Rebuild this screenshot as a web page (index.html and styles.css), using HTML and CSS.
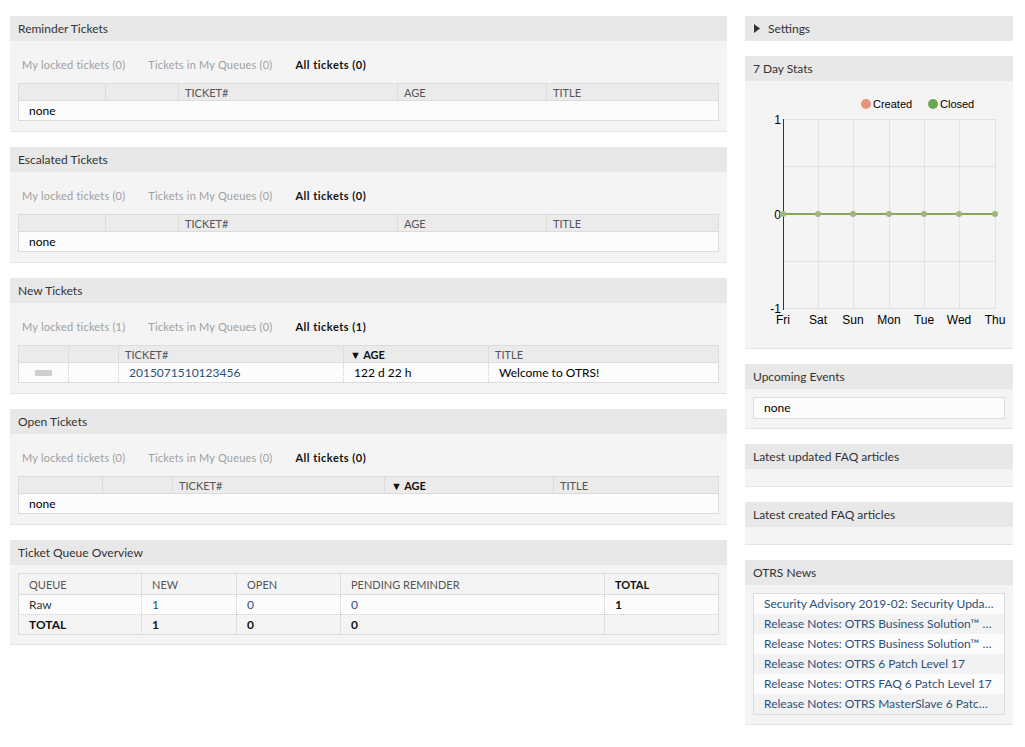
FILE: index.html
```html
<!DOCTYPE html>
<html>
<head>
<meta charset="utf-8">
<title>Dashboard</title>
<link rel="stylesheet" href="styles.css">
</head>
<body>
<div class="page">
  <div class="main">
    <section class="widget">
      <h2 class="widget-head">Reminder Tickets</h2>
      <div class="widget-body">
        <div class="tabs"><span class="tab">My locked tickets (0)</span><span class="tab">Tickets in My Queues (0)</span><span class="tab active">All tickets (0)</span></div>
        <table class="tickets">
          <colgroup><col style="width:87px"><col style="width:73px"><col style="width:219px"><col style="width:149px"><col></colgroup>
          <thead><tr><th></th><th></th><th>TICKET#</th><th>AGE</th><th>TITLE</th></tr></thead>
          <tbody><tr><td colspan="5" class="none">none</td></tr></tbody>
        </table>
      </div>
    </section>
    <section class="widget">
      <h2 class="widget-head">Escalated Tickets</h2>
      <div class="widget-body">
        <div class="tabs"><span class="tab">My locked tickets (0)</span><span class="tab">Tickets in My Queues (0)</span><span class="tab active">All tickets (0)</span></div>
        <table class="tickets">
          <colgroup><col style="width:87px"><col style="width:73px"><col style="width:219px"><col style="width:149px"><col></colgroup>
          <thead><tr><th></th><th></th><th>TICKET#</th><th>AGE</th><th>TITLE</th></tr></thead>
          <tbody><tr><td colspan="5" class="none">none</td></tr></tbody>
        </table>
      </div>
    </section>
    <section class="widget">
      <h2 class="widget-head">New Tickets</h2>
      <div class="widget-body">
        <div class="tabs"><span class="tab">My locked tickets (1)</span><span class="tab">Tickets in My Queues (0)</span><span class="tab active">All tickets (1)</span></div>
        <table class="tickets">
          <colgroup><col style="width:50px"><col style="width:50px"><col style="width:225px"><col style="width:145px"><col></colgroup>
          <thead><tr><th></th><th></th><th>TICKET#</th><th class="sorted">&#9660; AGE</th><th>TITLE</th></tr></thead>
          <tbody><tr><td><span class="prio"></span></td><td></td><td><a class="link" href="#">2015071510123456</a></td><td>122 d 22 h</td><td>Welcome to OTRS!</td></tr></tbody>
        </table>
      </div>
    </section>
    <section class="widget">
      <h2 class="widget-head">Open Tickets</h2>
      <div class="widget-body">
        <div class="tabs"><span class="tab">My locked tickets (0)</span><span class="tab">Tickets in My Queues (0)</span><span class="tab active">All tickets (0)</span></div>
        <table class="tickets">
          <colgroup><col style="width:84px"><col style="width:70px"><col style="width:212px"><col style="width:169px"><col></colgroup>
          <thead><tr><th></th><th></th><th>TICKET#</th><th class="sorted">&#9660; AGE</th><th>TITLE</th></tr></thead>
          <tbody><tr><td colspan="5" class="none">none</td></tr></tbody>
        </table>
      </div>
    </section>
    <section class="widget">
      <h2 class="widget-head">Ticket Queue Overview</h2>
      <div class="widget-body queue-body">
        <table class="queue">
          <colgroup><col style="width:123px"><col style="width:95px"><col style="width:104px"><col style="width:264px"><col></colgroup>
          <thead><tr><th>QUEUE</th><th>NEW</th><th>OPEN</th><th>PENDING REMINDER</th><th class="b">TOTAL</th></tr></thead>
          <tbody>
            <tr><td>Raw</td><td><a class="link" href="#">1</a></td><td><a class="link" href="#">0</a></td><td><a class="link" href="#">0</a></td><td class="b">1</td></tr>
            <tr class="total"><td>TOTAL</td><td>1</td><td>0</td><td>0</td><td></td></tr>
          </tbody>
        </table>
      </div>
    </section>
  </div>

  <div class="side">
    <section class="widget collapsed">
      <h2 class="widget-head settings"><svg class="tri" width="6" height="9" viewBox="0 0 6 9"><path d="M0 0 L6 4.5 L0 9 Z" fill="#333"/></svg>Settings</h2>
    </section>
    <section class="widget">
      <h2 class="widget-head">7 Day Stats</h2>
      <div class="widget-body chart-body">
        <svg class="chart" width="268" height="267" viewBox="0 0 268 267">
          <g font-family="Liberation Sans, Arial, sans-serif" font-size="11" fill="#000">
            <circle cx="121" cy="23" r="5" fill="#e8937a"/>
            <text x="128" y="27">Created</text>
            <circle cx="188" cy="23" r="5" fill="#6aa84f"/>
            <text x="195" y="27">Closed</text>
          </g>
          <g stroke="#e2e2e2" stroke-width="1">
            <line x1="38" y1="38.5" x2="250" y2="38.5"/>
            <line x1="38" y1="85.5" x2="250" y2="85.5"/>
            <line x1="38" y1="180.5" x2="250" y2="180.5"/>
            <line x1="38" y1="227.5" x2="250" y2="227.5"/>
            <line x1="73.5" y1="38" x2="73.5" y2="228"/>
            <line x1="108.5" y1="38" x2="108.5" y2="228"/>
            <line x1="144.5" y1="38" x2="144.5" y2="228"/>
            <line x1="179.5" y1="38" x2="179.5" y2="228"/>
            <line x1="214.5" y1="38" x2="214.5" y2="228"/>
            <line x1="250.5" y1="38" x2="250.5" y2="228"/>
          </g>
          <line x1="38.5" y1="38" x2="38.5" y2="229" stroke="#333" stroke-width="1"/>
          <g font-family="Liberation Sans, Arial, sans-serif" font-size="12" fill="#000">
            <text x="36" y="43" text-anchor="end">1</text>
            <text x="36" y="138" text-anchor="end">0</text>
            <text x="36" y="232" text-anchor="end">-1</text>
            <text x="38" y="243" text-anchor="middle">Fri</text>
            <text x="73" y="243" text-anchor="middle">Sat</text>
            <text x="108" y="243" text-anchor="middle">Sun</text>
            <text x="144" y="243" text-anchor="middle">Mon</text>
            <text x="179" y="243" text-anchor="middle">Tue</text>
            <text x="214" y="243" text-anchor="middle">Wed</text>
            <text x="250" y="243" text-anchor="middle">Thu</text>
          </g>
          <line x1="38" y1="133" x2="250" y2="133" stroke="#87a85c" stroke-width="2"/>
          <g fill="#9fb878">
            <circle cx="38" cy="133" r="3"/>
            <circle cx="73" cy="133" r="3"/>
            <circle cx="108" cy="133" r="3"/>
            <circle cx="144" cy="133" r="3"/>
            <circle cx="179" cy="133" r="3"/>
            <circle cx="214" cy="133" r="3"/>
            <circle cx="250" cy="133" r="3"/>
          </g>
        </svg>
      </div>
    </section>
    <section class="widget">
      <h2 class="widget-head">Upcoming Events</h2>
      <div class="widget-body list-body">
        <div class="box"><div class="box-row plain">none</div></div>
      </div>
    </section>
    <section class="widget">
      <h2 class="widget-head">Latest updated FAQ articles</h2>
      <div class="widget-body empty-body"></div>
    </section>
    <section class="widget">
      <h2 class="widget-head">Latest created FAQ articles</h2>
      <div class="widget-body empty-body"></div>
    </section>
    <section class="widget">
      <h2 class="widget-head">OTRS News</h2>
      <div class="widget-body list-body">
        <div class="box news">
          <a class="box-row" href="#">Security Advisory 2019-02: Security Update for OTRS Framework</a>
          <a class="box-row" href="#">Release Notes: OTRS Business Solution™ 6 Patch Level 17</a>
          <a class="box-row" href="#">Release Notes: OTRS Business Solution™ 5 Patch Level 34</a>
          <a class="box-row" href="#">Release Notes: OTRS 6 Patch Level 17</a>
          <a class="box-row" href="#">Release Notes: OTRS FAQ 6 Patch Level 17</a>
          <a class="box-row" href="#">Release Notes: OTRS MasterSlave 6 Patch Level 17</a>
        </div>
      </div>
    </section>
  </div>
</div>
</body>
</html>
```

FILE: styles.css
```css
* { box-sizing: border-box; }
html, body { margin: 0; padding: 0; background: #fff; }
body {
  font-family: "Lato", "Liberation Sans", sans-serif;
  font-size: 12px;
  color: #000;
}
.page {
  display: flex;
  align-items: flex-start;
  gap: 18px;
  padding: 16px 12px 0 10px;
}
.main { width: 717px; flex: none; }
.side { width: 268px; flex: none; }

.widget {
  margin: 0 0 15px 0;
  background: #f4f4f4;
  border-bottom: 1px solid #e4e4e4;
}
.widget.collapsed { border-bottom: none; }
.widget-head {
  margin: 0;
  height: 25px;
  line-height: 25px;
  padding: 0 8px;
  background: #e8e8e8;
  font-size: 12px;
  font-weight: normal;
  color: #333;
}
.widget-head.settings { display: flex; align-items: center; padding-left: 9px; }
.tri { margin-right: 8px; }

.widget-body { padding: 16px 8px 10px; }

.tabs {
  display: flex;
  gap: 23px;
  height: 16px;
  line-height: 16px;
  padding-left: 4px;
  margin-bottom: 10px;
  font-size: 11px;
  letter-spacing: 0.2px;
  color: #a0a0a0;
}
.tab.active { color: #111; font-weight: bold; letter-spacing: 0.5px; }

table { border-collapse: collapse; width: 100%; table-layout: fixed; }
.tickets { border: 1px solid #dcdcdc; }
.tickets th {
  background: #ebebeb;
  height: 17px;
  padding: 0 6px;
  font-size: 11px;
  font-weight: normal;
  color: #555;
  text-align: left;
  border-right: 1px solid #dcdcdc;
  border-bottom: 1px solid #dcdcdc;
}
.tickets th:last-child { border-right: none; }
.tickets th.sorted { font-weight: bold; color: #111; }
.tickets td {
  background: #fcfcfc;
  height: 20px;
  padding: 0 10px;
  font-size: 12px;
  color: #000;
  border-right: 1px dotted #ccc;
}
.tickets td:last-child { border-right: none; }
.tickets td.none { padding-left: 10px; }
.prio { display: block; width: 17px; height: 6px; background: #cfcfcf; margin-left: 6px; }

.link { color: #2c5178; text-decoration: none; }

.queue-body { padding: 8px 8px 9px; }
.queue { border: 1px solid #dcdcdc; }
.queue th {
  background: #f4f4f4;
  height: 21px;
  padding: 0 10px;
  font-size: 11px;
  font-weight: normal;
  color: #555;
  text-align: left;
  border-right: 1px solid #dcdcdc;
  border-bottom: 1px solid #dcdcdc;
}
.queue th:last-child { border-right: none; }
.queue td {
  background: #fcfcfc;
  height: 20px;
  padding: 0 10px;
  font-size: 12px;
  color: #333;
  border-right: 1px dotted #ccc;
  border-bottom: 1px dotted #ccc;
}
.queue td:last-child { border-right: none; }
.queue .b { font-weight: bold; color: #111; }
.queue tr.total td { font-weight: bold; color: #111; background: #f4f4f4; border-bottom: none; }

.chart-body { padding: 0; height: 267px; }
.chart { display: block; }

.list-body { padding: 8px 8px 9px; }
.box { border: 1px solid #dcdcdc; background: #fcfcfc; }
.box-row {
  display: block;
  height: 20px;
  line-height: 20px;
  padding: 0 10px;
  font-size: 12px;
  white-space: nowrap;
  overflow: hidden;
  text-overflow: ellipsis;
  color: #000;
  text-decoration: none;
}
.box-row.plain { color: #000; }
.news .box-row { color: #2c5178; background: #fcfcfc; }
.news .box-row:nth-child(even) { background: #f2f2f2; }
.empty-body { padding: 0; height: 17px; }
```
